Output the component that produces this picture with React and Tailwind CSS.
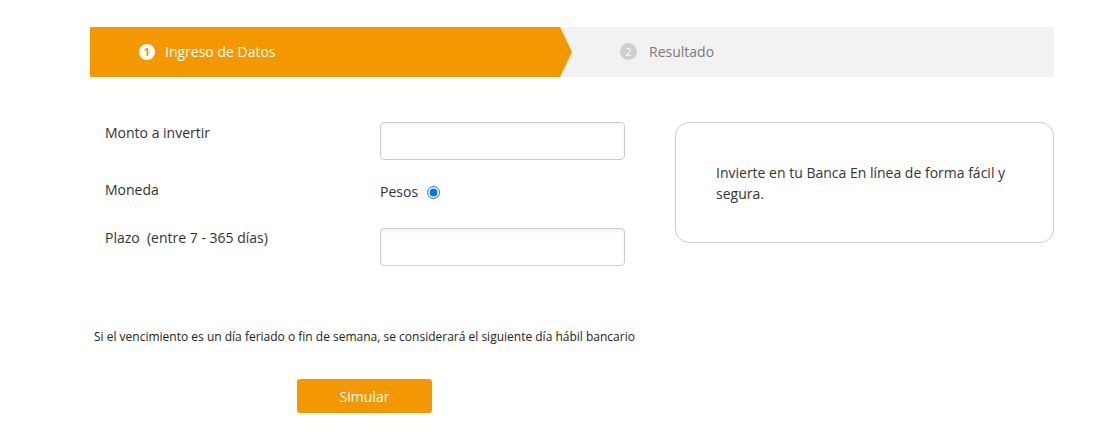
export default function App() {
  return (
    <div className="min-h-[443px] w-[1117px] bg-white text-[#333] font-['Open_Sans',sans-serif]">
      <div className="ml-[90px] w-[964px] pt-[27px]">
        {/* Steps */}
        <div className="flex h-[50px] bg-[#f2f2f2]">
          <div className="flex w-[482px] items-center bg-[#f39800] pb-[1px] pl-[49px] [clip-path:polygon(0_0,470px_0,482px_50%,470px_100%,0_100%)]">
            <span className="flex h-4 w-4 items-center justify-center rounded-full bg-white text-[11px] font-bold leading-none text-[#f39800]">1</span>
            <span className="ml-[10px] text-[14px] text-white">Ingreso de Datos</span>
          </div>
          <div className="flex flex-1 items-center pb-[1px] pl-[48px]">
            <span className="flex h-[17px] w-[17px] items-center justify-center rounded-full bg-[#cfcfcf] text-[11px] leading-none text-white">2</span>
            <span className="ml-[12px] text-[14px] text-[#7a7a7a]">Resultado</span>
          </div>
        </div>

        {/* Form + info */}
        <div className="mt-[45px] flex">
          <div className="w-[535px] pl-[15px]">
            <div className="flex h-[38px]">
              <div className="w-[275px] pt-[1px] text-[14px] leading-[20px]">Monto a invertir</div>
              <input className="h-[38px] w-[245px] rounded-[4px] border border-[#ccc] bg-white shadow-[inset_0_2px_4px_rgba(0,0,0,0.06)] outline-none" />
            </div>
            <div className="mt-[20px] flex h-[20px]">
              <div className="w-[275px] text-[14px] leading-[20px]">Moneda</div>
              <label className="flex items-center pt-[4px] text-[14px] leading-[20px]">
                Pesos
                <input type="radio" defaultChecked className="ml-[9px] h-[13px] w-[13px] accent-[#0075ff]" />
              </label>
            </div>
            <div className="mt-[28px] flex h-[38px]">
              <div className="w-[275px] text-[14px] leading-[20px]">Plazo&nbsp; (entre 7 - 365 días)</div>
              <input className="h-[38px] w-[245px] rounded-[4px] border border-[#ccc] bg-white shadow-[inset_0_2px_4px_rgba(0,0,0,0.06)] outline-none" />
            </div>
          </div>
          <div className="ml-[50px] h-[121px] w-[379px] rounded-[14px] border border-[#ccc] px-[40px] pt-[39px] text-[14px] leading-[21px]">
            Invierte en tu Banca En línea de forma fácil y segura.
          </div>
        </div>

        <div className="mt-[63px] pl-[4px] text-[12px] leading-[16px] text-[#222]">
          Si el vencimiento es un día feriado o fin de semana, se considerará el siguiente día hábil bancario
        </div>

        <div className="mt-[34px] pl-[207px]">
          <button className="h-[34px] w-[135px] rounded-[3px] bg-[#f39800] text-[14px] text-white">Simular</button>
        </div>
      </div>
    </div>
  );
}
